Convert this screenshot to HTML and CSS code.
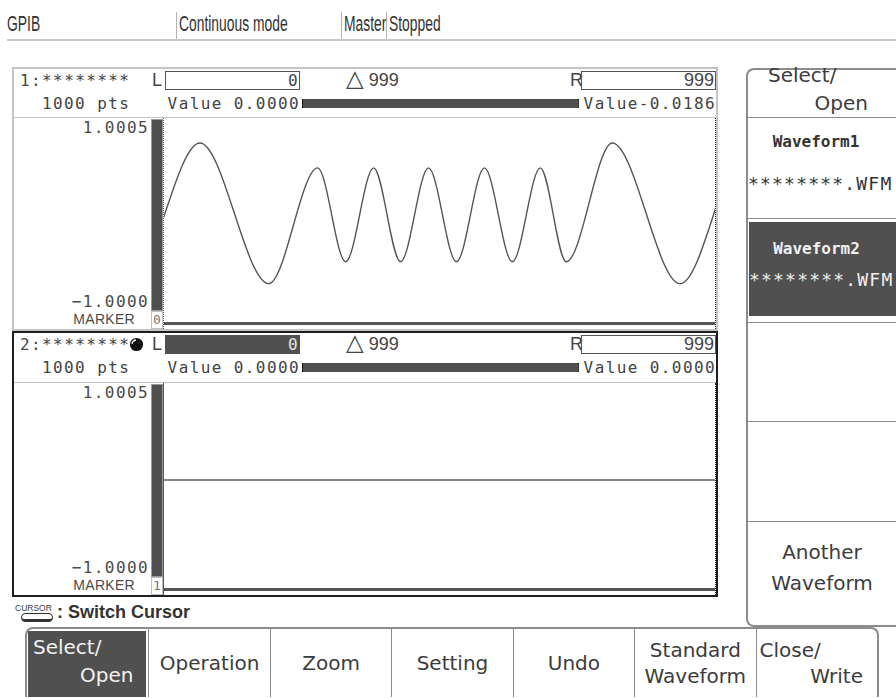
FILE: index.html
```html
<!DOCTYPE html>
<html lang="en">
  <head>
    <meta charset="UTF-8" />
    <meta name="viewport" content="width=device-width, initial-scale=1.0" />
    <title>Waveform Editor</title>
    <link rel="stylesheet" href="styles.css">
  </head>
  <body>
    <div class="status">
      <div class="cell first"><span class="nar">GPIB</span></div>
      <div class="cell"><span class="nar">Continuous mode</span></div>
      <div class="cell"><span class="nar">Master</span></div>
      <div class="cell"><span class="nar">Stopped</span></div>
    </div>

    <div class="main">
      <div class="scopes">
        <!-- waveform 1 -->
        <div class="wave">
          <div class="row1">
            <div class="name">1:********</div>
            <div class="tag">L</div>
            <div class="box">0</div>
            <div class="delta"><span class="tri">△</span> 999</div>
            <div class="tag">R</div>
            <div class="box sans">999</div>
          </div>
          <div class="row2">
            <div class="pts">1000 pts</div>
            <div class="val">Value 0.0000</div>
            <div class="bar"></div>
            <div class="val">Value-0.0186</div>
          </div>
          <div class="plot">
            <div class="axis">
              <div class="num top">1.0005</div>
              <div class="low">
                <div class="num">−1.0000</div>
                <div class="mk">MARKER</div>
              </div>
            </div>
            <div class="level">
              <div class="fill"></div>
              <div class="mknum">0</div>
            </div>
            <div class="area dotted">
              <svg viewBox="0 0 552 204" preserveAspectRatio="none">
                <path class="sig" d="M-34 166 C-10.67 166 12.67 25 36 25 C59 25 82 166 105 166 C121.33 166 137.67 50 154 50 C163.33 50 172.67 144 182 144 C191.33 144 200.67 50 210 50 C219 50 228 144 237 144 C246.33 144 255.67 50 265 50 C274.33 50 283.67 144 293 144 C302.33 144 311.67 50 321 50 C330.33 50 339.67 144 349 144 C358.33 144 367.67 50 377 50 C385.67 50 394.33 144 403 144 C418.33 144 433.67 25 449 25 C471.67 25 494.33 166 517 166 C539.67 166 562.33 25 585 25" />
              </svg>
              <div class="base"></div>
            </div>
          </div>
        </div>

        <!-- waveform 2 (active) -->
        <div class="wave act">
          <div class="row1">
            <div class="name">2:********<svg class="dot" viewBox="0 0 16 16"><circle cx="8" cy="8" r="7" /><path d="M3.2 7.4 A5 5 0 0 1 7.4 3.2" /></svg></div>
            <div class="tag">L</div>
            <div class="box on">0</div>
            <div class="delta"><span class="tri">△</span> 999</div>
            <div class="tag">R</div>
            <div class="box sans">999</div>
          </div>
          <div class="row2">
            <div class="pts">1000 pts</div>
            <div class="val">Value 0.0000</div>
            <div class="bar"></div>
            <div class="val">Value 0.0000</div>
          </div>
          <div class="plot">
            <div class="axis">
              <div class="num top">1.0005</div>
              <div class="low">
                <div class="num">−1.0000</div>
                <div class="mk">MARKER</div>
              </div>
            </div>
            <div class="level">
              <div class="fill"></div>
              <div class="mknum">1</div>
            </div>
            <div class="area">
              <svg viewBox="0 0 552 205" preserveAspectRatio="none">
                <line class="mid" x1="0" y1="97" x2="552" y2="97" />
              </svg>
              <div class="base"></div>
            </div>
          </div>
        </div>

        <div class="hint">
          <span class="knob"><span class="cap">CURSOR</span><span class="pill"></span></span>
          <span class="say">: Switch Cursor</span>
        </div>
      </div>

      <div class="side">
        <div class="head">
          <div class="l1">Select/</div>
          <div class="r">Open</div>
        </div>
        <div class="item">
          <div class="file">
            <div class="wname">Waveform1</div>
            <div class="fname">********.WFM</div>
          </div>
        </div>
        <div class="item sel">
          <div class="file">
            <div class="wname">Waveform2</div>
            <div class="fname">********.WFM</div>
          </div>
        </div>
        <div class="item"></div>
        <div class="item"></div>
        <div class="item last">
          <div class="two">Another<br />Waveform</div>
        </div>
      </div>
    </div>

    <div class="menu">
      <div class="key on">
        <div class="l1">Select/</div>
        <div class="r">Open</div>
      </div>
      <div class="key">Operation</div>
      <div class="key">Zoom</div>
      <div class="key">Setting</div>
      <div class="key">Undo</div>
      <div class="key">Standard<br />Waveform</div>
      <div class="key split">
        <div class="l1">Close/</div>
        <div class="r">Write</div>
      </div>
    </div>
  </body>
</html>
```

FILE: styles.css
```css
body {
  margin: 0;
  width: 896px;
  height: 698px;
  overflow: hidden;
  background: #fff;
  color: #3c3c3c;
  font-family: "DejaVu Sans", sans-serif;
}

/* status line */
.status {
  display: grid;
  grid-template-columns: 169px 165px 45px 1fr;
  height: 39px;
  margin-left: 7px;
  border-bottom: 2px solid #c8c8c8;
}
.cell {
  margin-top: 12px;
  padding-left: 2px;
  border-left: 1px solid #b4b4b4;
  line-height: 24px;
}
.cell.first {
  padding-left: 0;
  border-left: 0;
}
.nar {
  display: inline-block;
  font-family: "Liberation Sans", sans-serif;
  font-size: 22px;
  color: #333;
  white-space: nowrap;
  transform: scaleX(0.63);
  transform-origin: 0 50%;
}

.main {
  display: flex;
  margin-top: 26px;
}
.scopes {
  width: 706px;
  margin-left: 12px;
}

/* waveform panels */
.wave {
  height: 264px;
  box-sizing: border-box;
  border: 2px solid #c4c4c4;
  display: flex;
  flex-direction: column;
  font-family: "DejaVu Sans Mono", monospace;
  font-size: 16px;
  letter-spacing: 1.4px;
  color: #444;
}
.wave.act {
  height: 266px;
  border-color: #1e1e1e;
}
.row1 {
  display: grid;
  grid-template-columns: 136px 15px 135px 268px 13px 135px;
  height: 20px;
  align-items: center;
}
.name {
  padding-left: 6px;
  display: flex;
  align-items: center;
  white-space: nowrap;
}
.dot {
  width: 15px;
  height: 15px;
  margin-left: -1px;
}
.dot circle {
  fill: #111;
}
.dot path {
  fill: none;
  stroke: #fff;
  stroke-width: 1.4;
}
.tag {
  font-family: "Liberation Sans", sans-serif;
  font-size: 18px;
  letter-spacing: 0;
  padding-left: 2px;
}
.box {
  height: 19px;
  box-sizing: border-box;
  border: 1px solid #555;
  padding-right: 0;
  text-align: right;
  line-height: 17px;
}
.box.on {
  background: #505050;
  border-color: #505050;
  color: #e6e6e6;
}
.box.sans {
  padding-right: 1px;
  font-family: "Liberation Sans", sans-serif;
  font-size: 18px;
  letter-spacing: 0;
}
.delta {
  padding-left: 46px;
  font-family: "Liberation Sans", "DejaVu Sans", sans-serif;
  font-size: 18px;
  letter-spacing: 0;
}
.tri {
  font-family: "DejaVu Sans", sans-serif;
  font-size: 23px;
  line-height: 18px;
}
.row2 {
  display: grid;
  grid-template-columns: 151px 135px 281px 135px;
  height: 29px;
  align-items: center;
  border-bottom: 1px solid #c4c4c4;
}
.pts {
  padding-left: 28px;
}
.val {
  text-align: right;
  white-space: nowrap;
}
.bar {
  height: 9px;
  margin: 0 2px;
  background: #505050;
  border-left: 1px solid #111;
  border-right: 1px dotted #111;
}

/* plot */
.plot {
  flex: 1;
  display: grid;
  grid-template-columns: 137px 12px 1fr;
}
.axis {
  display: flex;
  flex-direction: column;
  justify-content: space-between;
  align-items: flex-end;
  padding-right: 2px;
  color: #4a4a4a;
}
.num {
  line-height: 14px;
}
.num.top {
  margin-top: 3px;
}
.low {
  display: flex;
  flex-direction: column;
  align-items: flex-end;
  margin-bottom: 4px;
}
.mk {
  margin-top: 5px;
  margin-right: 14px;
  font-family: "Liberation Sans", sans-serif;
  font-size: 14px;
  letter-spacing: 0.3px;
  line-height: 11px;
}
.level {
  display: flex;
  flex-direction: column;
}
.fill {
  flex: 1;
  margin-top: 1px;
  background: #4f4f4f;
  border: 1px solid #9a9a9a;
}
.mknum {
  height: 18px;
  box-sizing: border-box;
  border: 1px solid #c0c0c0;
  font-size: 13px;
  letter-spacing: 0;
  line-height: 16px;
  text-align: center;
  color: #777;
}
.area {
  display: flex;
  flex-direction: column;
  border-left: 1px solid #555;
  border-right: 1px dotted #222;
}
.area.dotted {
  border-left-style: dotted;
}
.area svg {
  flex: 1;
  display: block;
  width: 100%;
}
.sig {
  fill: none;
  stroke: #555;
  stroke-width: 1.4;
}
.mid {
  stroke: #888;
  stroke-width: 2;
}
.base {
  height: 3px;
  margin-bottom: 4px;
  background: #555;
}

/* cursor hint */
.hint {
  display: flex;
  align-items: center;
  height: 30px;
  margin-left: 3px;
}
.knob {
  display: flex;
  flex-direction: column;
}
.cap {
  font-family: "Liberation Sans", sans-serif;
  font-size: 8.5px;
  line-height: 10px;
}
.pill {
  width: 32px;
  height: 9px;
  box-sizing: border-box;
  margin-left: 6px;
  border: 1.5px solid #333;
  border-bottom-width: 3px;
  border-radius: 5px;
}
.say {
  margin-left: 4px;
  font-family: "Liberation Sans", sans-serif;
  font-weight: bold;
  font-size: 18px;
  color: #333;
}

/* soft keys, right */
.side {
  width: 150px;
  margin-left: 28px;
  margin-top: 1px;
  box-sizing: border-box;
  border: 2px solid #8c8c8c;
  border-right: 0;
  border-radius: 8px 0 0 8px;
  font-size: 20px;
}
.head {
  height: 48px;
  box-sizing: border-box;
  border-bottom: 1px solid #8c8c8c;
  display: flex;
  flex-direction: column;
  line-height: 28px;
}
.head .l1 {
  margin-top: -9px;
  padding-left: 20px;
}
.head .r {
  text-align: right;
  padding-right: 28px;
}
.item {
  height: 101px;
  box-sizing: border-box;
  border-bottom: 1px solid #8c8c8c;
}
.item.sel {
  height: 104px;
  padding: 3px 0 6px 1px;
}
.item.last {
  height: 97px;
  border-bottom: 0;
}
.item + .item + .item + .item {
  height: 100px;
}
.item + .item + .item {
  height: 99px;
}
.file {
  height: 100%;
  padding-top: 12px;
  box-sizing: border-box;
  font-family: "DejaVu Sans Mono", monospace;
  color: #333;
}
.sel .file {
  padding-top: 15px;
  background: #505050;
  color: #f0f0f0;
}
.wname {
  font-size: 16px;
  font-weight: bold;
  line-height: 24px;
  text-align: center;
  padding-right: 12px;
}
.fname {
  margin-top: 18px;
  font-size: 18px;
  letter-spacing: 1.2px;
  line-height: 24px;
  white-space: nowrap;
}
.sel .fname {
  margin-top: 7px;
}
.two {
  padding-top: 15px;
  line-height: 31px;
  text-align: center;
}

/* soft keys, bottom */
.menu {
  display: grid;
  grid-template-columns: repeat(7, 1fr);
  width: 854px;
  height: 70px;
  margin-left: 25px;
  box-sizing: border-box;
  border: 2px solid #8c8c8c;
  border-bottom: 0;
  border-radius: 8px 8px 0 0;
  font-size: 20px;
}
.key {
  display: flex;
  flex-direction: column;
  justify-content: center;
  align-items: center;
  text-align: center;
  line-height: 26px;
  border-left: 1px solid #8c8c8c;
}
.key.on {
  margin: 2px 2px 0 1px;
  padding-top: 2px;
  justify-content: flex-start;
  align-items: stretch;
  text-align: left;
  line-height: 28px;
  border-left: 0;
  background: #505050;
  color: #f2f2f2;
}
.key .l1 {
  padding-left: 5px;
  text-align: left;
}
.key .r {
  padding-right: 13px;
  text-align: right;
}
.key.split {
  justify-content: flex-start;
  align-items: stretch;
  padding-top: 8px;
}
.key.split .l1 {
  padding-left: 3px;
}
.key.split .r {
  padding-right: 14px;
}
```
